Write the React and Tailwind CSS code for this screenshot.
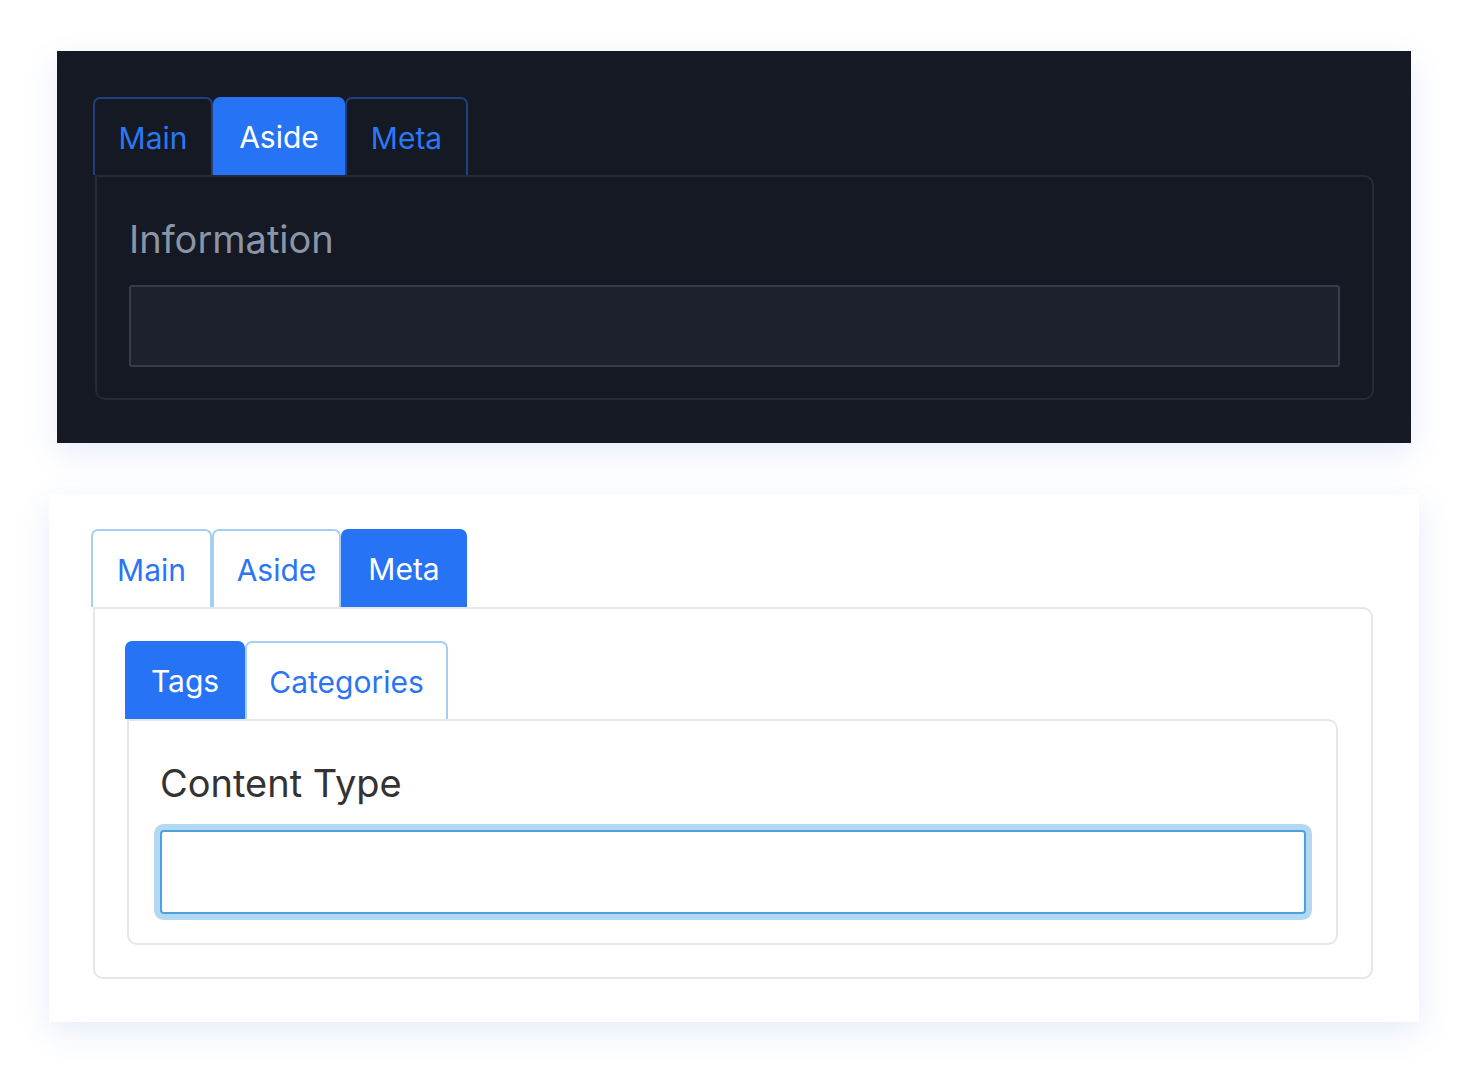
export default function App() {
  const font = { fontFamily: "Inter, 'Noto Sans', sans-serif" };
  return (
    <div className="min-h-[1073px] w-[1468px] bg-white pt-[51px]" style={font}>
      {/* Dark panel */}
      <div className="ml-[57px] w-[1354px] bg-[#151923] pt-[46px] pl-[36px] pr-[37px] pb-[43px] shadow-[0_10px_30px_rgba(60,110,220,0.13)]">
        <div className="flex h-[78px]">
          <div className="flex w-[120px] items-center justify-center rounded-t-[7px] border-2 border-b-0 border-[#1f3f7e] pt-[3px] text-[30px] text-[#2b78f5]">Main</div>
          <div className="flex w-[132px] items-center justify-center rounded-t-[7px] bg-[#2673f5] pt-[3px] text-[30px] text-white">Aside</div>
          <div className="flex w-[123px] items-center justify-center rounded-t-[7px] border-2 border-b-0 border-[#1f3f7e] pt-[3px] text-[30px] text-[#2b78f5]">Meta</div>
        </div>
        <div className="ml-[2px] rounded-[10px] rounded-tl-none border-2 border-[#252a36] px-[32px] pt-[40px] pb-[31px]">
          <div className="text-[38px] leading-[44px] text-[#8b95a8]">Information</div>
          <div className="mt-[24px] h-[82px] rounded-[3px] border-2 border-[#363c50] bg-[#1c212d]"></div>
        </div>
      </div>

      {/* Light panel */}
      <div className="ml-[49px] mt-[51px] w-[1370px] bg-white pt-[35px] pl-[42px] pr-[46px] pb-[43px] shadow-[0_10px_30px_rgba(60,110,220,0.13)]">
        <div className="flex h-[78px]">
          <div className="flex w-[121px] items-center justify-center rounded-t-[7px] border-2 border-b-0 border-[#a6cfef] pt-[3px] text-[30px] text-[#2a75f3]">Main</div>
          <div className="flex w-[129px] items-center justify-center rounded-t-[7px] border-2 border-b-0 border-[#a6cfef] pt-[3px] text-[30px] text-[#2a75f3]">Aside</div>
          <div className="flex w-[126px] items-center justify-center rounded-t-[7px] bg-[#2673f5] pt-[3px] text-[30px] text-white">Meta</div>
        </div>
        <div className="ml-[2px] rounded-[10px] rounded-tl-none border-2 border-[#e6e6e6] pl-[30px] pr-[33px] pt-[32px] pb-[32px]">
          <div className="flex h-[78px]">
            <div className="flex w-[120px] items-center justify-center rounded-t-[7px] bg-[#2673f5] pt-[3px] text-[30px] text-white">Tags</div>
            <div className="flex w-[203px] items-center justify-center rounded-t-[7px] border-2 border-b-0 border-[#a6cfef] pt-[3px] text-[30px] text-[#2a75f3]">Categories</div>
          </div>
          <div className="ml-[2px] rounded-[10px] rounded-tl-none border-2 border-[#e6e6e6] pl-[31px] pr-[30px] pt-[40px] pb-[29px]">
            <div className="text-[38px] leading-[44px] text-[#333333]">Content Type</div>
            <div className="mt-[25px] h-[84px] rounded-[4px] border-2 border-[#4aa3e0] bg-white shadow-[0_0_0_6px_#b5d8f1]"></div>
          </div>
        </div>
      </div>
    </div>
  );
}
